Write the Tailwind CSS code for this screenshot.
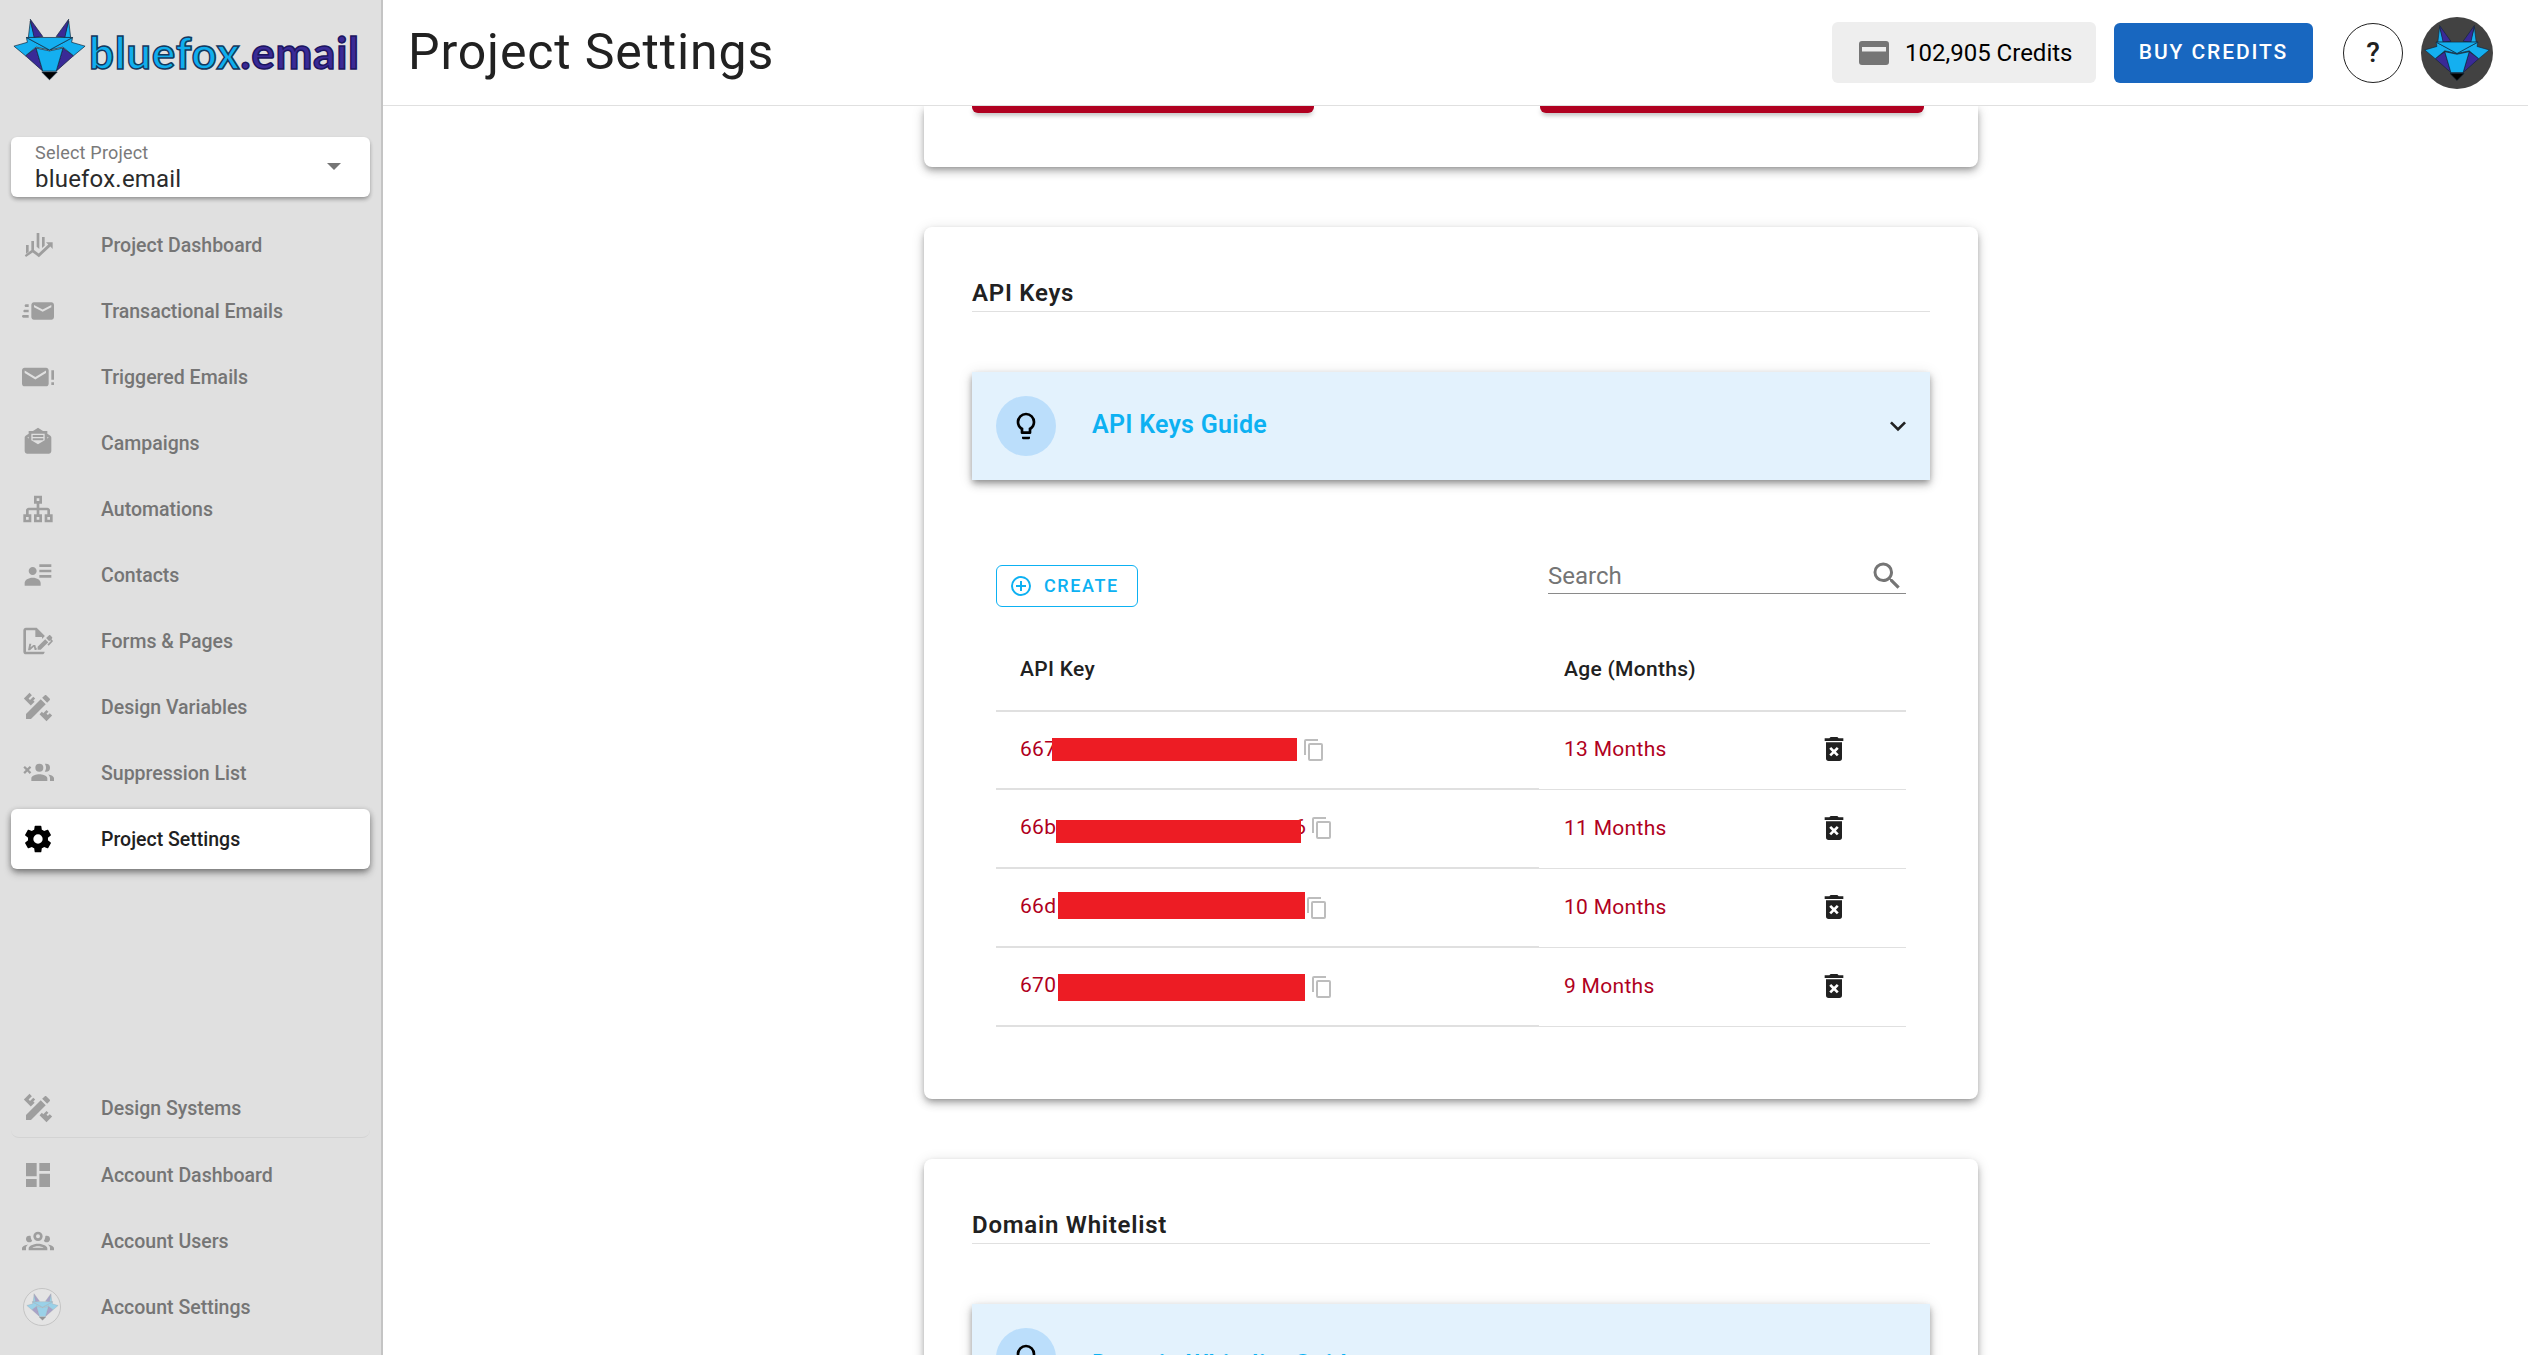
<!DOCTYPE html>
<html>

<head>
  <script src="https://cdn.jsdelivr.net/npm/@tailwindcss/browser@4"></script>
  <title>Project Settings</title>
</head>

<body>
  <svg class="hidden">
    <symbol id="fox" viewBox="10 16 78 67">
      <g stroke="#0d2238" stroke-width="0.7" stroke-linejoin="round">
        <polygon points="27,37 29,20 34,37" fill="#14aff0" />
        <polygon points="29,18 42,36 33,37" fill="#3a2a96" />
        <polygon points="71,37 69,20 64,37" fill="#14aff0" />
        <polygon points="69,18 56,36 65,37" fill="#3a2a96" />
        <polygon points="24,56 35,48 42,72" fill="#3a2a96" />
        <polygon points="74,56 63,48 56,72" fill="#3a2a96" />
        <polygon points="35,48 49,51 63,48 56,72 42,72" fill="#14aff0" />
        <polygon points="25,37 49,50 35,47 24,56 12,46 26,42" fill="#14aff0" />
        <polygon points="73,37 49,50 63,47 74,56 86,46 72,42" fill="#14aff0" />
        <polygon points="25,37 73,37 49,50" fill="#14aff0" />
        <polygon points="41,73 57,73 49,81" fill="#000" />
      </g>
    </symbol>
  </svg>

  <div class="flex h-screen w-full overflow-hidden bg-white font-['Roboto',sans-serif]">
    <!-- sidebar -->
    <aside class="flex h-full w-[383px] shrink-0 flex-col justify-between border-r-2 border-[#c4c4c4] bg-[#e0e0e0] px-[11px] pb-[18px]">
      <div>
        <div class="flex h-[137px] items-start pl-[1px] pt-[17px]">
          <svg class="h-[65px] w-[75px] shrink-0"><use href="#fox" /></svg>
          <span class="ml-[2px] mt-[7px] font-['Lato',sans-serif] text-[44px] font-bold leading-[56px] tracking-[0.7px] text-[#10aeee] [-webkit-text-stroke:1.5px_#14395f]">bluefox<span class="text-[#3a2a96] [-webkit-text-stroke:1.5px_#1c1560]">.email</span></span>
        </div>
        <div class="relative flex h-[60px] flex-col justify-center rounded-md bg-white pl-[24px] shadow-[0_2px_4px_-1px_rgba(0,0,0,.3),0_3px_4px_rgba(0,0,0,.14)]">
          <div class="text-[18px] leading-[21px] tracking-[0.2px] text-[#7a7a7a]">Select Project</div>
          <div class="mt-[3px] text-[24px] leading-[26px] tracking-[0.2px] text-[#2b2b2b]">bluefox.email</div>
          <div class="absolute left-[316px] top-[26px] h-0 w-0 border-x-[7px] border-t-[7px] border-x-transparent border-t-[#757575]"></div>
        </div>

        <nav class="mt-[18px] flex flex-col gap-[6px] text-[19.5px] font-medium text-[#757575] [&_span]:mt-[2px]">
          <a class="flex h-[60px] items-center">
            <svg class="ml-[11px] h-[32px] w-[32px] fill-[#9e9e9e]" viewBox="0 0 24 24"><path d="M3 12h2v5l-2 1.5zM7 9h2v6.5l-2 1.5zM11 3h2v12l-2-1.6zM15 6h2v6.5l-2 1.8zM3 21l-.9-1.3L8 15l4.5 3.4 7.2-6.8L18 10h5v5l-1.7-1.9-8.6 8L8 17.6z" /></svg>
            <span class="ml-[47px]">Project Dashboard</span>
          </a>
          <a class="flex h-[60px] items-center">
            <svg class="ml-[11px] h-[32px] w-[32px] fill-[#9e9e9e]" viewBox="0 0 24 24"><path d="M22 5.5H9C7.9 5.5 7 6.4 7 7.5V16.5C7 17.61 7.9 18.5 9 18.5H22C23.11 18.5 24 17.61 24 16.5V7.5C24 6.4 23.11 5.5 22 5.5M22 9.17L15.5 12.5L9 9.17V7.5L15.5 10.81L22 7.5V9.17M5 16.5C5 16.67 5.03 16.83 5.05 17H1C.448 17 0 16.55 0 16S.448 15 1 15H5V16.5M3 7H5.05C5.03 7.17 5 7.33 5 7.5V9H3C2.45 9 2 8.55 2 8S2.45 7 3 7M1 12C1 11.45 1.45 11 2 11H5V13H2C1.45 13 1 12.55 1 12Z" /></svg>
            <span class="ml-[47px]">Transactional Emails</span>
          </a>
          <a class="flex h-[60px] items-center">
            <svg class="ml-[11px] h-[32px] w-[32px] fill-[#9e9e9e]" viewBox="0 0 24 24"><path d="M18 9V7.2L10 12L2 7.2V9L10 13.8L18 9M18 5C19.1 5 20 5.9 20 7V17C20 18.11 19.11 19 18 19H2C.9 19 0 18.1 0 17V7C0 5.9 .9 5 2 5H18M22 7H24V14H22V7M22 16H24V18H22V16Z" /></svg>
            <span class="ml-[47px]">Triggered Emails</span>
          </a>
          <a class="flex h-[60px] items-center">
            <svg class="ml-[11px] h-[32px] w-[32px] fill-[#9e9e9e]" viewBox="0 0 24 24"><path d="M12 .64L8.23 3H5V5L2.97 6.29C2.39 6.63 2 7.27 2 8V18C2 19.1 2.9 20 4 20H20C21.1 20 22 19.1 22 18V8C22 7.27 21.61 6.63 21.03 6.29L19 5V3H15.77M7 5H17V9.88L12 13L7 9.88V5M8 6V7.5H16V6M5 7.38V8.63L4 8M19 7.38L20 8L19 8.63M8 8.5V10H16V8.5Z" /></svg>
            <span class="ml-[47px]">Campaigns</span>
          </a>
          <a class="flex h-[60px] items-center">
            <svg class="ml-[11px] h-[32px] w-[32px] fill-[#9e9e9e]" viewBox="0 0 24 24"><path d="M9 2V8H11V11H5C3.9 11 3 11.9 3 13V16H1V22H7V16H5V13H11V16H9V22H15V16H13V13H19V16H17V22H23V16H21V13C21 11.9 20.1 11 19 11H13V8H15V2H9M11 4H13V6H11V4M3 18H5V20H3V18M11 18H13V20H11V18M19 18H21V20H19V18Z" /></svg>
            <span class="ml-[47px]">Automations</span>
          </a>
          <a class="flex h-[60px] items-center">
            <svg class="ml-[11px] h-[32px] w-[32px] fill-[#9e9e9e]" viewBox="0 0 24 24"><path d="M11 9C11 10.66 9.66 12 8 12C6.34 12 5 10.66 5 9C5 7.34 6.34 6 8 6C9.66 6 11 7.34 11 9M14 20H2V18C2 15.79 4.69 14 8 14C11.31 14 14 15.79 14 18M22 12V14H13V12M22 8V10H13V8M22 4V6H13V4Z" /></svg>
            <span class="ml-[47px]">Contacts</span>
          </a>
          <a class="flex h-[60px] items-center">
            <svg class="ml-[11px] h-[32px] w-[32px] fill-[#9e9e9e]" viewBox="0 0 24 24"><path d="M19.7 12.9L14 18.6H11.7V16.3L17.4 10.6L19.7 12.9M23.1 12.1C23.1 12.4 22.8 12.7 22.5 13L20 15.5L19.1 14.6L21.7 12L21.1 11.4L20.4 12.1L18.1 9.8L20.3 7.7C20.5 7.5 20.9 7.5 21.2 7.7L22.6 9.1C22.8 9.3 22.8 9.7 22.6 10C22.4 10.2 22.2 10.4 22.2 10.6C22.2 10.8 22.4 11 22.6 11.2C22.9 11.5 23.2 11.8 23.1 12.1M3 20V4H10V9H15V10.5L17 8.5V8L11 2H3C1.9 2 1 2.9 1 4V20C1 21.1 1.9 22 3 22H15C16.1 22 17 21.1 17 20H3M11 17.1C10.8 17.1 10.6 17.2 10.5 17.2L10 15H8.5L6.4 16.7L7 14H5.5L4.5 19H6L8.9 16.4L9.5 18.7H10.5L11 18.6V17.1Z" /></svg>
            <span class="ml-[47px]">Forms &amp; Pages</span>
          </a>
          <a class="flex h-[60px] items-center">
            <svg class="ml-[11px] h-[32px] w-[32px] fill-[#9e9e9e]" viewBox="0 0 24 24"><path d="M3 17.25V21H6.75L17.81 9.93L14.06 6.18L3 17.25M22.61 18.36L18.36 22.61L13.16 17.41L14.93 15.64L15.93 16.64L18.4 14.16L19.82 15.58L18.36 17L19.42 18L20.84 16.6L22.61 18.36M6.6 10.83L1.39 5.64L5.64 1.39L7.4 3.16L4.93 5.64L6 6.7L8.46 4.22L9.88 5.64L8.46 7.05L9.46 8.05L6.6 10.83M20.71 7C21.1 6.61 21.1 6 20.71 5.59L18.37 3.29C18 2.9 17.35 2.9 16.96 3.29L15.12 5.12L18.87 8.87L20.71 7Z" /></svg>
            <span class="ml-[47px]">Design Variables</span>
          </a>
          <a class="flex h-[60px] items-center">
            <svg class="ml-[11px] h-[32px] w-[32px] fill-[#9e9e9e]" viewBox="0 0 24 24"><path d="M13 13C11 13 7 14 7 16V18H19V16C19 14 15 13 13 13M19.62 13.16C20.45 13.88 21 14.82 21 16V18H24V16C24 14.46 21.63 13.5 19.62 13.16M13 11A3 3 0 0 0 16 8A3 3 0 0 0 13 5A3 3 0 0 0 10 8A3 3 0 0 0 13 11M18 11A3 3 0 0 0 21 8A3 3 0 0 0 18 5C17.68 5 17.37 5.05 17.08 5.14C17.65 5.95 18 6.94 18 8C18 9.06 17.65 10.04 17.08 10.85C17.37 10.95 17.68 11 18 11M1 7.9L2.2 6.7L4 8.5L5.8 6.7L7 7.9L5.2 9.7L7 11.5L5.8 12.7L4 10.9L2.2 12.7L1 11.5L2.8 9.7Z" /></svg>
            <span class="ml-[47px]">Suppression List</span>
          </a>
          <a class="flex h-[60px] items-center rounded-md bg-white text-[#212121] shadow-[0_3px_6px_-1px_rgba(0,0,0,.35),0_5px_8px_rgba(0,0,0,.18),0_1px_6px_rgba(0,0,0,.12)]">
            <svg class="ml-[11px] h-[32px] w-[32px] fill-black" viewBox="0 0 24 24"><path d="M12,15.5A3.5,3.5 0 0,1 8.5,12A3.5,3.5 0 0,1 12,8.5A3.5,3.5 0 0,1 15.5,12A3.5,3.5 0 0,1 12,15.5M19.43,12.97C19.47,12.65 19.5,12.33 19.5,12C19.5,11.67 19.47,11.34 19.43,11L21.54,9.37C21.73,9.22 21.78,8.95 21.66,8.73L19.66,5.27C19.54,5.05 19.27,4.96 19.05,5.05L16.56,6.05C16.04,5.66 15.5,5.32 14.87,5.07L14.5,2.42C14.46,2.18 14.25,2 14,2H10C9.75,2 9.54,2.18 9.5,2.42L9.13,5.07C8.5,5.32 7.96,5.66 7.44,6.05L4.95,5.05C4.73,4.96 4.46,5.05 4.34,5.27L2.34,8.73C2.21,8.95 2.27,9.22 2.46,9.37L4.57,11C4.53,11.34 4.5,11.67 4.5,12C4.5,12.33 4.53,12.65 4.57,12.97L2.46,14.63C2.27,14.78 2.21,15.05 2.34,15.27L4.34,18.73C4.46,18.95 4.73,19.03 4.95,18.95L7.44,17.94C7.96,18.34 8.5,18.68 9.13,18.93L9.5,21.58C9.54,21.82 9.75,22 10,22H14C14.25,22 14.46,21.82 14.5,21.58L14.87,18.93C15.5,18.67 16.04,18.34 16.56,17.94L19.05,18.95C19.27,19.03 19.54,18.95 19.66,18.73L21.66,15.27C21.78,15.05 21.73,14.78 21.54,14.63L19.43,12.97Z" /></svg>
            <span class="ml-[47px]">Project Settings</span>
          </a>
        </nav>
      </div>

      <div class="flex flex-col text-[19.5px] font-medium text-[#757575] [&_span]:mt-[2px]">
        <a class="flex h-[60px] items-center rounded-b-lg border-b border-[#d3d3d3]">
          <svg class="ml-[11px] h-[32px] w-[32px] fill-[#9e9e9e]" viewBox="0 0 24 24"><path d="M3 17.25V21H6.75L17.81 9.93L14.06 6.18L3 17.25M22.61 18.36L18.36 22.61L13.16 17.41L14.93 15.64L15.93 16.64L18.4 14.16L19.82 15.58L18.36 17L19.42 18L20.84 16.6L22.61 18.36M6.6 10.83L1.39 5.64L5.64 1.39L7.4 3.16L4.93 5.64L6 6.7L8.46 4.22L9.88 5.64L8.46 7.05L9.46 8.05L6.6 10.83M20.71 7C21.1 6.61 21.1 6 20.71 5.59L18.37 3.29C18 2.9 17.35 2.9 16.96 3.29L15.12 5.12L18.87 8.87L20.71 7Z" /></svg>
          <span class="ml-[47px]">Design Systems</span>
        </a>
        <a class="mt-[7px] flex h-[60px] items-center">
          <svg class="ml-[11px] h-[32px] w-[32px] fill-[#9e9e9e]" viewBox="0 0 24 24"><path d="M13,3V9H21V3M13,21H21V11H13M3,21H11V15H3M3,13H11V3H3V13Z" /></svg>
          <span class="ml-[47px]">Account Dashboard</span>
        </a>
        <a class="mt-[6px] flex h-[60px] items-center">
          <svg class="ml-[11px] h-[32px] w-[32px] fill-[#9e9e9e]" viewBox="0 0 24 24"><path d="M12,5A3.5,3.5 0 0,0 8.5,8.5A3.5,3.5 0 0,0 12,12A3.5,3.5 0 0,0 15.5,8.5A3.5,3.5 0 0,0 12,5M12,7A1.5,1.5 0 0,1 13.5,8.5A1.5,1.5 0 0,1 12,10A1.5,1.5 0 0,1 10.5,8.5A1.5,1.5 0 0,1 12,7M5.5,8A2.5,2.5 0 0,0 3,10.5C3,11.44 3.53,12.25 4.29,12.68C4.65,12.88 5.06,13 5.5,13C5.94,13 6.35,12.88 6.71,12.68C7.08,12.47 7.39,12.17 7.62,11.81C6.89,10.86 6.5,9.7 6.5,8.5C6.5,8.41 6.5,8.31 6.5,8.22C6.2,8.08 5.86,8 5.5,8M18.5,8C18.14,8 17.8,8.08 17.5,8.22C17.5,8.31 17.5,8.41 17.5,8.5C17.5,9.7 17.11,10.86 16.38,11.81C16.5,12 16.63,12.15 16.78,12.3C16.94,12.45 17.1,12.58 17.29,12.68C17.65,12.88 18.06,13 18.5,13C18.94,13 19.35,12.88 19.71,12.68C20.47,12.25 21,11.44 21,10.5A2.5,2.5 0 0,0 18.5,8M12,14C9.66,14 5,15.17 5,17.5V19H19V17.5C19,15.17 14.34,14 12,14M4.71,14.55C2.78,14.78 0,15.76 0,17.5V19H3V17.07C3,16.06 3.69,15.22 4.71,14.55M19.29,14.55C20.31,15.22 21,16.06 21,17.07V19H24V17.5C24,15.76 21.22,14.78 19.29,14.55M12,16C13.53,16 15.24,16.5 16.23,17H7.77C8.76,16.5 10.47,16 12,16Z" /></svg>
          <span class="ml-[47px]">Account Users</span>
        </a>
        <a class="mt-[6px] flex h-[60px] items-center">
          <div class="ml-[12px] flex h-[38px] w-[38px] items-center justify-center rounded-full border border-[#c4c4c4] bg-[#e4e4e4]">
            <svg class="h-[30px] w-[33px] opacity-35"><use href="#fox" /></svg>
          </div>
          <span class="ml-[40px]">Account Settings</span>
        </a>
      </div>
    </aside>

    <!-- main -->
    <main class="flex h-full min-w-0 flex-1 flex-col">
      <header class="relative z-10 flex h-[106px] shrink-0 items-center border-b border-[#e0e0e0] bg-white pl-[25px] pr-[35px]">
        <h1 class="text-[50px] font-normal tracking-[0.85px] text-[#212121]">Project Settings</h1>
        <div class="ml-auto flex items-center">
          <div class="flex h-[61px] w-[264px] items-center rounded-md bg-[#eeeeee] pl-[24px] text-[24px] text-black">
            <svg class="h-[36px] w-[36px] fill-[#757575]" viewBox="0 0 24 24"><path d="M4 4H20A2 2 0 0 1 22 6V18A2 2 0 0 1 20 20H4A2 2 0 0 1 2 18V6A2 2 0 0 1 4 4M4 8V11H20V8H4Z" /></svg>
            <span class="ml-[13px]">102,905 Credits</span>
          </div>
          <button class="ml-[18px] h-[60px] w-[199px] rounded-md bg-[#1867c0] text-[21px] font-medium tracking-[1.9px] text-white">BUY CREDITS</button>
          <div class="ml-[30px] flex h-[60px] w-[60px] items-center justify-center rounded-full border border-[#212121] text-[28px] font-medium text-[#212121]">?</div>
          <div class="ml-[18px] flex h-[72px] w-[72px] items-center justify-center rounded-full bg-[#424242]">
            <svg class="h-[62px] w-[68px]"><use href="#fox" /></svg>
          </div>
        </div>
      </header>

      <div class="min-h-0 flex-1 overflow-hidden pl-[541px]">
        <!-- previous card, scrolled under the header -->
        <section class="flex h-[61px] w-[1054px] justify-between rounded-b-lg bg-white px-[48px] shadow-[0_3px_6px_-2px_rgba(0,0,0,.3),0_5px_8px_rgba(0,0,0,.16),0_2px_14px_rgba(0,0,0,.12)]">
          <div class="h-[7px] w-[342px] rounded-b-md bg-[#b00020] shadow-[0_3px_5px_-1px_rgba(0,0,0,.3)]"></div>
          <div class="mr-[6px] h-[7px] w-[384px] rounded-b-md bg-[#b00020] shadow-[0_3px_5px_-1px_rgba(0,0,0,.3)]"></div>
        </section>

        <!-- api keys -->
        <section class="mt-[60px] w-[1054px] rounded-lg bg-white px-[48px] pb-[72px] pt-[48px] shadow-[0_3px_6px_-2px_rgba(0,0,0,.3),0_5px_8px_rgba(0,0,0,.16),0_2px_14px_rgba(0,0,0,.12)]">
          <h2 class="h-[37px] border-b border-[#e0e0e0] text-[24px] font-semibold leading-[36px] tracking-[0.75px] text-[#212121]">API Keys</h2>

          <div class="mt-[60px] flex h-[108px] items-center bg-[#e3f2fd] pl-[24px] pr-[16px] shadow-[0_3px_6px_-1px_rgba(0,0,0,.3),0_5px_8px_rgba(0,0,0,.16),0_2px_14px_rgba(0,0,0,.12)]">
            <div class="flex h-[60px] w-[60px] items-center justify-center rounded-full bg-[#bbdefb]">
              <svg class="h-[32px] w-[32px] fill-black" viewBox="0 0 24 24"><path d="M12,2A7,7 0 0,1 19,9C19,11.38 17.81,13.47 16,14.74V17A1,1 0 0,1 15,18H9A1,1 0 0,1 8,17V14.74C6.19,13.47 5,11.38 5,9A7,7 0 0,1 12,2M9,21V20H15V21A1,1 0 0,1 14,22H10A1,1 0 0,1 9,21M12,4A5,5 0 0,0 7,9C7,11.05 8.23,12.81 10,13.58V16H14V13.58C15.77,12.81 17,11.05 17,9A5,5 0 0,0 12,4Z" /></svg>
            </div>
            <span class="mb-[2px] ml-[36px] text-[25px] font-semibold tracking-[0.25px] text-[#0db1f2]">API Keys Guide</span>
            <svg class="ml-auto h-[32px] w-[32px] fill-[#212121]" viewBox="0 0 24 24"><path d="M7.41,8.58L12,13.17L16.59,8.58L18,10L12,16L6,10L7.41,8.58Z" /></svg>
          </div>

          <div class="mx-[24px] mt-[85px] flex h-[42px] items-end justify-between">
            <button class="flex h-[42px] w-[142px] items-center rounded-md border border-[#0db1f2] pl-[12px] text-[18px] font-medium tracking-[1.6px] text-[#0db1f2]">
              <svg class="h-[24px] w-[24px] fill-[#0db1f2]" viewBox="0 0 24 24"><path d="M12,20C7.59,20 4,16.41 4,12C4,7.59 7.59,4 12,4C16.41,4 20,7.59 20,12C20,16.41 16.41,20 12,20M12,2A10,10 0 0,0 2,12A10,10 0 0,0 12,22A10,10 0 0,0 22,12A10,10 0 0,0 12,2M13,7H11V11H7V13H11V17H13V13H17V11H13V7Z" /></svg>
              <span class="mb-[2px] ml-[11px]">CREATE</span>
            </button>
            <div class="mb-[13px] flex h-[36px] w-[358px] items-center justify-between border-b border-[#8a8a8a] pr-[1px]">
              <span class="text-[24px] text-[#757575]">Search</span>
              <svg class="h-[36px] w-[36px] fill-[#757575]" viewBox="0 0 24 24"><path d="M9.5,3A6.5,6.5 0 0,1 16,9.5C16,11.11 15.41,12.59 14.44,13.73L14.71,14H15.5L20.5,19L19,20.5L14,15.5V14.71L13.73,14.44C12.59,15.41 11.11,16 9.5,16A6.5,6.5 0 0,1 3,9.5A6.5,6.5 0 0,1 9.5,3M9.5,5C7,5 5,7 5,9.5C5,12 7,14 9.5,14C12,14 14,12 14,9.5C14,7 12,5 9.5,5Z" /></svg>
            </div>
          </div>

          <div class="mx-[24px] mt-[25px] grid grid-cols-[543px_367px] text-[21px] tracking-[0.3px] [&_span]:mt-[2px]">
            <div class="flex h-[80px] items-center border-b-2 border-[#e0e0e0] pb-[3px] pl-[24px] font-medium text-[#212121]">API Key</div>
            <div class="flex h-[80px] items-center border-b-2 border-[#e0e0e0] pb-[3px] pl-[25px] font-medium text-[#212121]">Age (Months)</div>

            <div class="relative flex h-[78px] items-center border-b-2 border-[#e0e0e0] pb-[3px] pl-[24px] text-[#b00020]">
              <span>667</span>
              <svg class="ml-[246px] mt-[3px] h-[24px] w-[24px] fill-[#bdbdbd]" viewBox="0 0 24 24"><path d="M19,21H8V7H19M19,5H8A2,2 0 0,0 6,7V21A2,2 0 0,0 8,23H19A2,2 0 0,0 21,21V7A2,2 0 0,0 19,5M16,1H4A2,2 0 0,0 2,3V17H4V3H16V1Z" /></svg>
              <div class="absolute left-[56px] top-[26px] h-[23px] w-[245px] bg-[#ed1c24]"></div>
            </div>
            <div class="flex h-[78px] items-center border-b border-[#e0e0e0] pb-[3px] pl-[25px] text-[#b00020]">
              <span class="w-[254px]">13 Months</span>
              <svg class="h-[32px] w-[32px] fill-[#212121]" viewBox="0 0 24 24"><path d="M6,19A2,2 0 0,0 8,21H16A2,2 0 0,0 18,19V7H6V19M8.46,11.88L9.87,10.47L12,12.59L14.12,10.47L15.53,11.88L13.41,14L15.53,16.12L14.12,17.53L12,15.41L9.88,17.53L8.47,16.12L10.59,14L8.46,11.88M15.5,4L14.5,3H9.5L8.5,4H5V6H19V4H15.5Z" /></svg>
            </div>

            <div class="relative flex h-[79px] items-center border-b-2 border-[#e0e0e0] pb-[3px] pl-[24px] text-[#b00020]">
              <span>66b</span><span class="ml-[238px]">6</span>
              <svg class="ml-[4px] mt-[2px] h-[24px] w-[24px] fill-[#bdbdbd]" viewBox="0 0 24 24"><path d="M19,21H8V7H19M19,5H8A2,2 0 0,0 6,7V21A2,2 0 0,0 8,23H19A2,2 0 0,0 21,21V7A2,2 0 0,0 19,5M16,1H4A2,2 0 0,0 2,3V17H4V3H16V1Z" /></svg>
              <div class="absolute left-[60px] top-[30px] h-[23px] w-[245px] bg-[#ed1c24]"></div>
            </div>
            <div class="flex h-[79px] items-center border-b border-[#e0e0e0] pb-[3px] pl-[25px] text-[#b00020]">
              <span class="w-[254px]">11 Months</span>
              <svg class="h-[32px] w-[32px] fill-[#212121]" viewBox="0 0 24 24"><path d="M6,19A2,2 0 0,0 8,21H16A2,2 0 0,0 18,19V7H6V19M8.46,11.88L9.87,10.47L12,12.59L14.12,10.47L15.53,11.88L13.41,14L15.53,16.12L14.12,17.53L12,15.41L9.88,17.53L8.47,16.12L10.59,14L8.46,11.88M15.5,4L14.5,3H9.5L8.5,4H5V6H19V4H15.5Z" /></svg>
            </div>

            <div class="relative flex h-[79px] items-center border-b-2 border-[#e0e0e0] pb-[3px] pl-[24px] text-[#b00020]">
              <span>66d</span>
              <svg class="ml-[249px] mt-[3px] h-[24px] w-[24px] fill-[#bdbdbd]" viewBox="0 0 24 24"><path d="M19,21H8V7H19M19,5H8A2,2 0 0,0 6,7V21A2,2 0 0,0 8,23H19A2,2 0 0,0 21,21V7A2,2 0 0,0 19,5M16,1H4A2,2 0 0,0 2,3V17H4V3H16V1Z" /></svg>
              <div class="absolute left-[62px] top-[23px] h-[27px] w-[247px] bg-[#ed1c24]"></div>
            </div>
            <div class="flex h-[79px] items-center border-b border-[#e0e0e0] pb-[3px] pl-[25px] text-[#b00020]">
              <span class="w-[254px]">10 Months</span>
              <svg class="h-[32px] w-[32px] fill-[#212121]" viewBox="0 0 24 24"><path d="M6,19A2,2 0 0,0 8,21H16A2,2 0 0,0 18,19V7H6V19M8.46,11.88L9.87,10.47L12,12.59L14.12,10.47L15.53,11.88L13.41,14L15.53,16.12L14.12,17.53L12,15.41L9.88,17.53L8.47,16.12L10.59,14L8.46,11.88M15.5,4L14.5,3H9.5L8.5,4H5V6H19V4H15.5Z" /></svg>
            </div>

            <div class="relative flex h-[79px] items-center border-b-2 border-[#e0e0e0] pb-[3px] pl-[24px] text-[#b00020]">
              <span>670</span>
              <svg class="ml-[254px] mt-[3px] h-[24px] w-[24px] fill-[#bdbdbd]" viewBox="0 0 24 24"><path d="M19,21H8V7H19M19,5H8A2,2 0 0,0 6,7V21A2,2 0 0,0 8,23H19A2,2 0 0,0 21,21V7A2,2 0 0,0 19,5M16,1H4A2,2 0 0,0 2,3V17H4V3H16V1Z" /></svg>
              <div class="absolute left-[62px] top-[26px] h-[27px] w-[247px] bg-[#ed1c24]"></div>
            </div>
            <div class="flex h-[79px] items-center border-b border-[#e0e0e0] pb-[3px] pl-[25px] text-[#b00020]">
              <span class="w-[254px]">9 Months</span>
              <svg class="h-[32px] w-[32px] fill-[#212121]" viewBox="0 0 24 24"><path d="M6,19A2,2 0 0,0 8,21H16A2,2 0 0,0 18,19V7H6V19M8.46,11.88L9.87,10.47L12,12.59L14.12,10.47L15.53,11.88L13.41,14L15.53,16.12L14.12,17.53L12,15.41L9.88,17.53L8.47,16.12L10.59,14L8.46,11.88M15.5,4L14.5,3H9.5L8.5,4H5V6H19V4H15.5Z" /></svg>
            </div>
          </div>
        </section>

        <!-- domain whitelist -->
        <section class="mt-[60px] w-[1054px] rounded-lg bg-white px-[48px] pb-[72px] pt-[48px] shadow-[0_3px_6px_-2px_rgba(0,0,0,.3),0_5px_8px_rgba(0,0,0,.16),0_2px_14px_rgba(0,0,0,.12)]">
          <h2 class="h-[37px] border-b border-[#e0e0e0] text-[24px] font-semibold leading-[36px] tracking-[0.75px] text-[#212121]">Domain Whitelist</h2>
          <div class="mt-[60px] flex h-[108px] items-center bg-[#e3f2fd] pl-[24px] pr-[16px] shadow-[0_3px_6px_-1px_rgba(0,0,0,.3),0_5px_8px_rgba(0,0,0,.16),0_2px_14px_rgba(0,0,0,.12)]">
            <div class="flex h-[60px] w-[60px] items-center justify-center rounded-full bg-[#bbdefb]">
              <svg class="h-[32px] w-[32px] fill-black" viewBox="0 0 24 24"><path d="M12,2A7,7 0 0,1 19,9C19,11.38 17.81,13.47 16,14.74V17A1,1 0 0,1 15,18H9A1,1 0 0,1 8,17V14.74C6.19,13.47 5,11.38 5,9A7,7 0 0,1 12,2M9,21V20H15V21A1,1 0 0,1 14,22H10A1,1 0 0,1 9,21M12,4A5,5 0 0,0 7,9C7,11.05 8.23,12.81 10,13.58V16H14V13.58C15.77,12.81 17,11.05 17,9A5,5 0 0,0 12,4Z" /></svg>
            </div>
            <span class="ml-[36px] mt-[13px] text-[25px] font-semibold tracking-[0.3px] text-[#0db1f2]">Domain Whitelist Guide</span>
          </div>
        </section>
      </div>
    </main>
  </div>
</body>

</html>
